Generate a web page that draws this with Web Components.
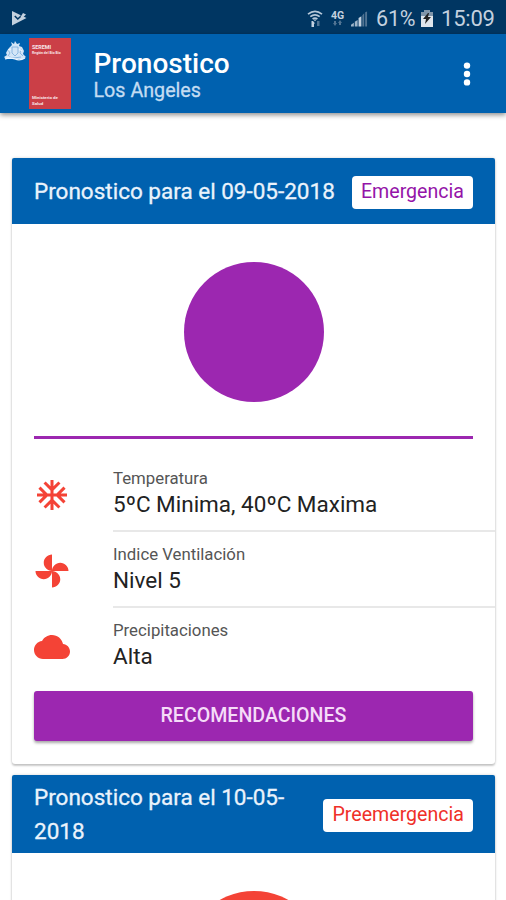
<!DOCTYPE html>
<html lang="es">
<head>
<meta charset="utf-8">
<meta name="viewport" content="width=device-width, initial-scale=1">
<title>Pronostico</title>
<style>
  body {
    display: flex;
    flex-direction: column;
    margin: 0;
    height: 900px;
    overflow: hidden;
    background: #fff;
    color: #222;
    font-family: Roboto, "Liberation Sans", sans-serif;
  }
  main {
    flex: 1;
    min-height: 0;
    overflow: hidden;
    box-sizing: border-box;
    padding: 45px 11px 0 12px;
  }
  forecast-card + forecast-card { margin-top: 11px; }
</style>
</head>
<body>
<status-bar battery="61%" time="15:09"></status-bar>
<app-header>
  <seremi-logo slot="logo"></seremi-logo>
  Pronostico
  <span slot="subtitle">Los Angeles</span>
</app-header>
<main>
  <forecast-card level="Emergencia" action="RECOMENDACIONES" style="--tone: #9c27b0; --label: #9414a8">
    <span slot="title">Pronostico para el 09-05-2018</span>
    <forecast-item icon="snow" label="Temperatura">5ºC Minima, 40ºC Maxima</forecast-item>
    <forecast-item icon="fan" label="Indice Ventilación">Nivel 5</forecast-item>
    <forecast-item icon="cloud" label="Precipitaciones">Alta</forecast-item>
  </forecast-card>
  <forecast-card level="Preemergencia" style="--tone: #f44336; --label: #ef3028; --head-height: 78px">
    <span slot="title">Pronostico para el 10-05-2018</span>
  </forecast-card>
</main>

<script>
const ICONS = {
  snow: `<path d="M22 11h-4.17l3.24-3.24-1.41-1.42L15 11h-2V9l4.66-4.66-1.42-1.41L13 6.17V2h-2v4.17L7.76 2.93 6.34 4.34 11 9v2H9L4.34 6.34 2.93 7.76 6.17 11H2v2h4.17l-3.24 3.24 1.41 1.42L9 13h2v2l-4.66 4.66 1.42 1.41L11 17.83V22h2v-4.17l3.24 3.24 1.42-1.41L13 15v-2h2l4.66 4.66 1.41-1.42L17.83 13H22z"/>`,
  fan: `<path d="M12 12c0-3 2.5-5.5 5.5-5.5S23 9 23 12H12zm0 0c0 3-2.5 5.5-5.5 5.5S1 15 1 12h11zm0 0c-3 0-5.5-2.5-5.5-5.5S9 1 12 1v11zm0 0c3 0 5.5 2.5 5.5 5.5S15 23 12 23V12z"/>`,
  cloud: `<path d="M19.35 10.04C18.67 6.59 15.64 4 12 4 9.11 4 6.6 5.64 5.35 8.04 2.34 8.36 0 10.91 0 14c0 3.31 2.69 6 6 6h13c2.76 0 5-2.24 5-5 0-2.64-2.05-4.78-4.65-4.96z"/>`
};

class StatusBar extends HTMLElement {
  constructor() {
    super();
    this.attachShadow({ mode: 'open' });
    this.shadowRoot.innerHTML = `
      <style>
        :host {
          display: flex;
          align-items: center;
          box-sizing: border-box;
          flex: none;
          height: 34px;
          padding: 2px 11px 0 12px;
          background: #003662;
          color: #c3d1df;
          font-size: 22px;
        }
        svg { display: block; flex: none; }
        .store { margin-right: auto; }
        .signal { margin: 0 8px 0 6px; }
        .network { display: flex; flex-direction: column; align-items: center; width: 15px; margin-left: 7px; }
        .network b { font-size: 10.5px; line-height: 9px; }
        .battery { margin: 0 8px 0 5px; }
        .percent { width: 40px; font-size: 21.5px; letter-spacing: -.2px; }
        .time { width: 54px; letter-spacing: -.2px; }
      </style>
      <svg class="store" width="15" height="16" viewBox="0 0 15 16">
        <path fill="#c3d1df" d="M0 1 14.5 8 0 15.5Z"/>
        <path fill="none" stroke="#003662" stroke-width="1.6" d="m2.8 6 3 3 6.5-6"/>
        <path fill="#c3d1df" d="m11 3 3 1.5-3.5 3.5-2-1z"/>
      </svg>
      <svg width="16" height="17" viewBox="0 0 16 17">
        <g fill="none" stroke="#b7c9da" stroke-width="1.7">
          <path d="M1 4.2Q8-1.4 15 4.2M3.3 6.7Q8 3 12.7 6.7M5.6 9Q8 7.2 10.4 9"/>
        </g>
        <path fill="#c3d1df" d="m6.5 9.5 1.5 1.8 1.5-1.8zM6 11 8.2 13.5H7V17H4.5V11z"/>
        <path fill="#517493" d="M10 11h2.5v5H10z"/>
      </svg>
      <div class="network">
        <b>4G</b>
        <svg width="9" height="6" viewBox="0 0 9 6"><path fill="#517493" d="M0 3h1V1h2v2h1L2 6zM5 3l2-3 2 3H8v2H6V3z"/></svg>
      </div>
      <svg class="signal" width="17" height="17" viewBox="0 0 18 17">
        <path fill="#9eb5c9" d="M0 17v-2l3-2v4zM4 17v-5l3-2v7z"/>
        <path fill="#c3d1df" d="M8 17V8l3-2v11z"/>
        <path fill="#517493" d="M12 17V5l2-2v14zM15 17V2l2-1v16z"/>
      </svg>
      <span class="percent"></span>
      <svg class="battery" width="12" height="17" viewBox="0 0 12 17">
        <path fill="#8096aa" d="M3 0h6v2h3v5H0V2h3z"/>
        <path fill="#dfe6ec" d="M0 6h12v11H0z"/>
        <path fill="#222" d="M7 3 2 9h3l-1 5 6-7H7l1-4z"/>
      </svg>
      <span class="time"></span>
    `;
  }

  connectedCallback() {
    this.shadowRoot.querySelector('.percent').textContent = this.getAttribute('battery');
    this.shadowRoot.querySelector('.time').textContent = this.getAttribute('time');
  }
}

class SeremiLogo extends HTMLElement {
  constructor() {
    super();
    this.attachShadow({ mode: 'open' });
    this.shadowRoot.innerHTML = `
      <style>
        :host { display: flex; align-items: flex-start; gap: 3px; }
        svg { display: block; margin-top: 3px; }
        .plate {
          display: flex;
          flex-direction: column;
          box-sizing: border-box;
          width: 42px;
          height: 71px;
          padding: 7px 0 3px 3px;
          background: #cb3f47;
          color: #f7e4e7;
          font-size: 4.4px;
          line-height: 5.5px;
          font-weight: bold;
          white-space: nowrap;
        }
        .name { font-size: 5.4px; }
        .region { font-size: 3.5px; }
        .ministry { margin-top: auto; }
      </style>
      <svg width="22" height="20" viewBox="0 0 22 20">
        <path fill="#d3e5f7" d="M8 4 7 1l3 2 1-3 2 3 3-1-1 3 3 1 2 4-1 3 3 3-3 2H2l-2-2 3-2-1-2 1-2 2-3z"/>
        <g fill="none" stroke="#78abdb" stroke-width=".8">
          <path d="M8 6v6l3 3 3-3V6zM4 9l2 3-2 3M17 8l-1 4 3 3M5 16l5 1 7-1"/>
        </g>
        <path fill="none" stroke="#edf5ff" stroke-width="1.3" d="M1 18q5-2 10 0t10-1M7 8l-3 1M15 8l3 2"/>
      </svg>
      <div class="plate">
        <span class="name">SEREMI</span>
        <span class="region">Región del Bío Bío</span>
        <span class="ministry">Ministerio de<br>Salud</span>
      </div>
    `;
  }
}

class AppHeader extends HTMLElement {
  constructor() {
    super();
    this.attachShadow({ mode: 'open' });
    this.shadowRoot.innerHTML = `
      <style>
        :host {
          display: flex;
          align-items: flex-start;
          box-sizing: border-box;
          flex: none;
          position: relative;
          height: 79px;
          padding: 4px 35px 0 4px;
          background: #0061af;
          color: #fff;
          box-shadow: 0 2px 5px rgba(0, 0, 0, .45);
        }
        .titles { margin: 10px auto 0 22.5px; }
        h1 {
          margin: 0;
          font-size: 28px;
          line-height: 32px;
          font-weight: 500;
        }
        .subtitle {
          color: #c3dcf2;
          font-size: 19.7px;
          line-height: 21px;
          -webkit-text-stroke: .3px;
        }
        svg { display: block; margin-top: 24px; }
      </style>
      <slot name="logo"></slot>
      <div class="titles">
        <h1><slot></slot></h1>
        <div class="subtitle"><slot name="subtitle"></slot></div>
      </div>
      <svg width="8" height="24" viewBox="0 0 8 24" fill="#fff">
        <circle cx="4" cy="3.6" r="3.2"/><circle cx="4" cy="12" r="3.2"/><circle cx="4" cy="20.4" r="3.2"/>
      </svg>
    `;
  }
}

class ForecastItem extends HTMLElement {
  constructor() {
    super();
    this.attachShadow({ mode: 'open' });
    this.shadowRoot.innerHTML = `
      <style>
        :host {
          display: flex;
          align-items: center;
          height: 76px;
          padding-left: 22px;
        }
        svg { display: block; flex: none; width: 36px; height: 36px; margin-top: 2px; fill: #f44336; }
        .text {
          flex: 1;
          box-sizing: border-box;
          height: 76px;
          margin-left: 43px;
          padding-top: 11px;
          border-bottom: 2px solid #e8e8e8;
        }
        :host(:last-of-type) .text { border-color: transparent; }
        .label { color: #555; font-size: 16.8px; line-height: 22px; }
        .value { font-size: 22.5px; line-height: 30px; }
      </style>
      <svg viewBox="0 0 24 24"></svg>
      <div class="text">
        <div class="label"></div>
        <div class="value"><slot></slot></div>
      </div>
    `;
  }

  connectedCallback() {
    this.shadowRoot.querySelector('svg').innerHTML = ICONS[this.getAttribute('icon')];
    this.shadowRoot.querySelector('.label').textContent = this.getAttribute('label');
  }
}

class ForecastCard extends HTMLElement {
  constructor() {
    super();
    this.attachShadow({ mode: 'open' });
    this.shadowRoot.innerHTML = `
      <style>
        :host {
          display: block;
          height: 606px;
          border-radius: 3px;
          background: #fff;
          box-shadow: 0 2px 2px rgba(0, 0, 0, .18), 0 0 3px rgba(0, 0, 0, .18);
        }
        header {
          display: flex;
          align-items: center;
          box-sizing: border-box;
          height: var(--head-height, 66px);
          padding: 0 22px;
          border-radius: 2px 2px 0 0;
          background: #0061af;
          color: #eaf3fc;
        }
        h2 {
          flex: 1;
          margin: 0;
          font-size: 22.5px;
          line-height: 34px;
          font-weight: 400;
          -webkit-text-stroke: .3px;
        }
        .level {
          box-sizing: border-box;
          height: 33px;
          margin: 2px 0 0 12px;
          padding: 0 9px;
          border-radius: 4px;
          background: #fff;
          color: var(--label);
          font-size: 19.6px;
          line-height: 31px;
        }
        .circle {
          width: 140px;
          height: 140px;
          margin: 38px auto 34px;
          border-radius: 50%;
          background: var(--tone);
        }
        hr {
          height: 2.5px;
          margin: 0 22px 17px;
          border: 0;
          background: var(--tone);
        }
        button {
          display: block;
          width: calc(100% - 44px);
          height: 50px;
          margin: 7px 22px 0;
          padding: 0;
          border: 0;
          border-radius: 3px;
          background: var(--tone);
          color: #f5dcf8;
          box-shadow: 0 2px 3px rgba(0, 0, 0, .35);
          font: 500 19.6px/48px Roboto, sans-serif;
        }
        button[hidden] { display: none; }
      </style>
      <header>
        <h2><slot name="title"></slot></h2>
        <span class="level"></span>
      </header>
      <div class="circle"></div>
      <hr>
      <slot></slot>
      <button type="button" hidden></button>
    `;
  }

  connectedCallback() {
    this.shadowRoot.querySelector('.level').textContent = this.getAttribute('level');
    if (this.hasAttribute('action')) {
      const button = this.shadowRoot.querySelector('button');
      button.textContent = this.getAttribute('action');
      button.hidden = false;
    }
  }
}

customElements.define('status-bar', StatusBar);
customElements.define('seremi-logo', SeremiLogo);
customElements.define('app-header', AppHeader);
customElements.define('forecast-item', ForecastItem);
customElements.define('forecast-card', ForecastCard);
</script>
</body>
</html>
